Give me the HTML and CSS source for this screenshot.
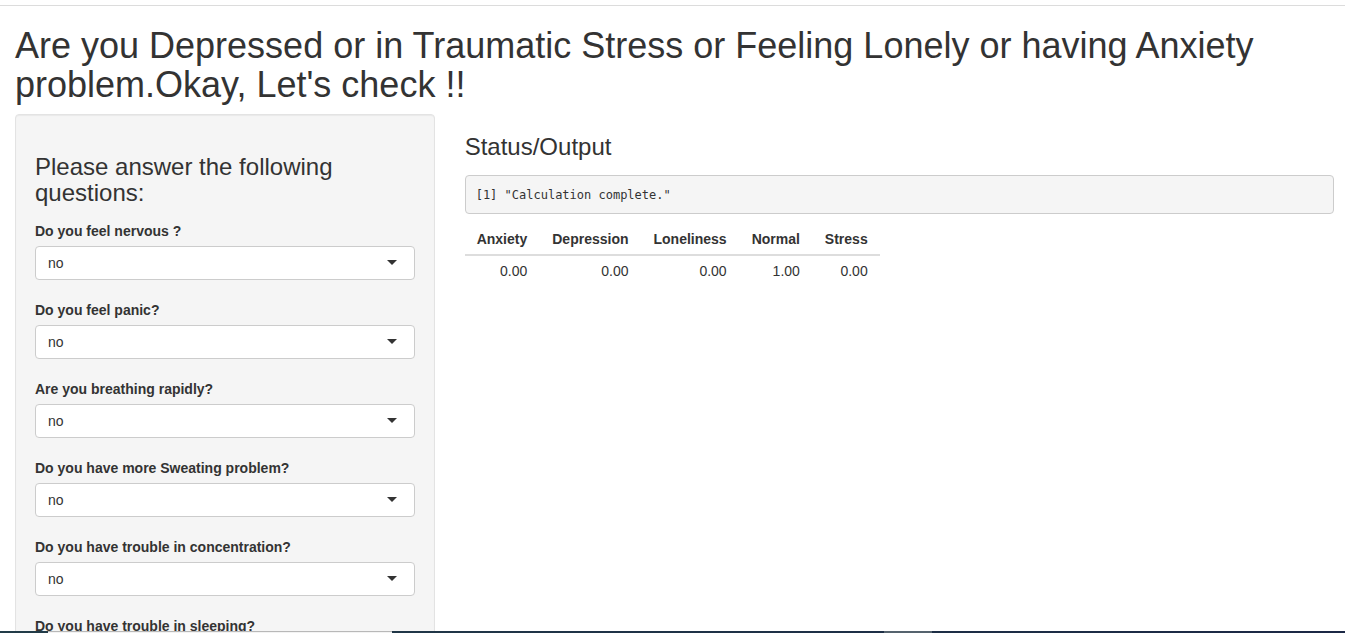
FILE: index.html
```html
<!DOCTYPE html>
<html lang="en">
<head>
<meta charset="utf-8">
<meta name="viewport" content="width=device-width, initial-scale=1">
<title>Mental health check</title>
<link rel="stylesheet" href="styles.css">
</head>
<body>
<div class="page">
  <h1 class="page-title">Are you Depressed or in Traumatic Stress or Feeling Lonely or having Anxiety problem.Okay, Let's check !!</h1>
  <div class="layout">
    <form class="sidebar">
      <h2 class="section-title">Please answer the following questions:</h2>
      <div class="field">
        <label for="nervous">Do you feel nervous ?</label>
        <div class="select-box">
          <select id="nervous"><option>no</option><option>yes</option></select>
          <svg class="caret" viewBox="0 0 10 5" aria-hidden="true"><path d="M0 0h10L5 5z"/></svg>
        </div>
      </div>
      <div class="field">
        <label for="panic">Do you feel panic?</label>
        <div class="select-box">
          <select id="panic"><option>no</option><option>yes</option></select>
          <svg class="caret" viewBox="0 0 10 5" aria-hidden="true"><path d="M0 0h10L5 5z"/></svg>
        </div>
      </div>
      <div class="field">
        <label for="breathing">Are you breathing rapidly?</label>
        <div class="select-box">
          <select id="breathing"><option>no</option><option>yes</option></select>
          <svg class="caret" viewBox="0 0 10 5" aria-hidden="true"><path d="M0 0h10L5 5z"/></svg>
        </div>
      </div>
      <div class="field">
        <label for="sweating">Do you have more Sweating problem?</label>
        <div class="select-box">
          <select id="sweating"><option>no</option><option>yes</option></select>
          <svg class="caret" viewBox="0 0 10 5" aria-hidden="true"><path d="M0 0h10L5 5z"/></svg>
        </div>
      </div>
      <div class="field">
        <label for="concentration">Do you have trouble in concentration?</label>
        <div class="select-box">
          <select id="concentration"><option>no</option><option>yes</option></select>
          <svg class="caret" viewBox="0 0 10 5" aria-hidden="true"><path d="M0 0h10L5 5z"/></svg>
        </div>
      </div>
      <div class="field">
        <label for="sleeping">Do you have trouble in sleeping?</label>
        <div class="select-box">
          <select id="sleeping"><option>no</option><option>yes</option></select>
          <svg class="caret" viewBox="0 0 10 5" aria-hidden="true"><path d="M0 0h10L5 5z"/></svg>
        </div>
      </div>
    </form>
    <main class="results">
      <h2 class="section-title">Status/Output</h2>
      <pre class="output">[1] "Calculation complete."</pre>
      <table class="scores">
        <thead>
          <tr><th scope="col">Anxiety</th><th scope="col">Depression</th><th scope="col">Loneliness</th><th scope="col">Normal</th><th scope="col">Stress</th></tr>
        </thead>
        <tbody>
          <tr><td>0.00</td><td>0.00</td><td>0.00</td><td>1.00</td><td>0.00</td></tr>
        </tbody>
      </table>
    </main>
  </div>
</div>
<div class="taskbar" aria-hidden="true">
  <span class="taskbar-start"></span>
  <span class="taskbar-search"></span>
  <span class="taskbar-apps"></span>
  <span class="taskbar-active"></span>
  <span class="taskbar-tray"></span>
</div>
</body>
</html>
```
FILE: styles.css
```css
* {
  box-sizing: border-box;
}

body {
  display: flex;
  flex-direction: column;
  height: 100vh;
  margin: 0;
  padding-top: 5px;
  overflow: hidden;
  background: #fff;
  color: #333;
  font: 14px/20px "Liberation Sans", Arial, sans-serif;
}

.page {
  flex: 1;
  min-height: 0;
  overflow: hidden;
  padding: 20px 11px 0 15px;
  border-top: 1px solid #dcdcdc;
}

.page-title {
  margin: 0 0 10px;
  font-size: 36px;
  font-weight: 400;
  line-height: 39px;
}

.layout {
  display: grid;
  grid-template-columns: repeat(12, 1fr);
  column-gap: 30px;
  align-items: start;
}

.sidebar {
  grid-column: span 4;
  padding: 19px;
  background: #f5f5f5;
  border: 1px solid #e3e3e3;
  border-radius: 4px;
  box-shadow: inset 0 1px 1px rgba(0, 0, 0, 0.05);
}

.results {
  grid-column: span 8;
}

.section-title {
  margin: 20px 0 15px;
  font-size: 24px;
  font-weight: 400;
  line-height: 26px;
}

.field {
  margin-bottom: 20px;
}

.field label {
  display: block;
  margin-bottom: 5px;
  font-weight: 700;
}

.select-box {
  position: relative;
}

.select-box select {
  display: block;
  width: 100%;
  height: 34px;
  padding: 0 12px;
  appearance: none;
  background: #fff;
  border: 1px solid #ccc;
  border-radius: 4px;
  color: #333;
  font: inherit;
}

.caret {
  position: absolute;
  top: 14px;
  right: 18px;
  width: 10px;
  height: 5px;
  fill: #333;
  pointer-events: none;
}

.output {
  margin: 0 0 10px;
  padding: 10px 10px 8px;
  background: #f5f5f5;
  border: 1px solid #ccc;
  border-radius: 4px;
  font: 12px/19px "DejaVu Sans Mono", monospace;
}

.scores {
  border-collapse: collapse;
}

.scores th,
.scores td {
  padding: 5px 12px;
  text-align: right;
}

.scores th + th {
  padding-left: 13px;
}

.scores th {
  border-bottom: 2px solid #ddd;
}

.taskbar {
  display: flex;
  height: 2px;
  background: linear-gradient(to right, #223c48, #1b2845);
}

.taskbar-start {
  flex: 0 0 48px;
}

.taskbar-search {
  flex: 0 0 344px;
  background: #f3f3f3;
  border-top: 1px solid #b8b8b8;
}

.taskbar-apps {
  flex: 0 0 492px;
}

.taskbar-active {
  flex: 0 0 48px;
  background: #55636e;
}

.taskbar-tray {
  flex: 1;
}
```
